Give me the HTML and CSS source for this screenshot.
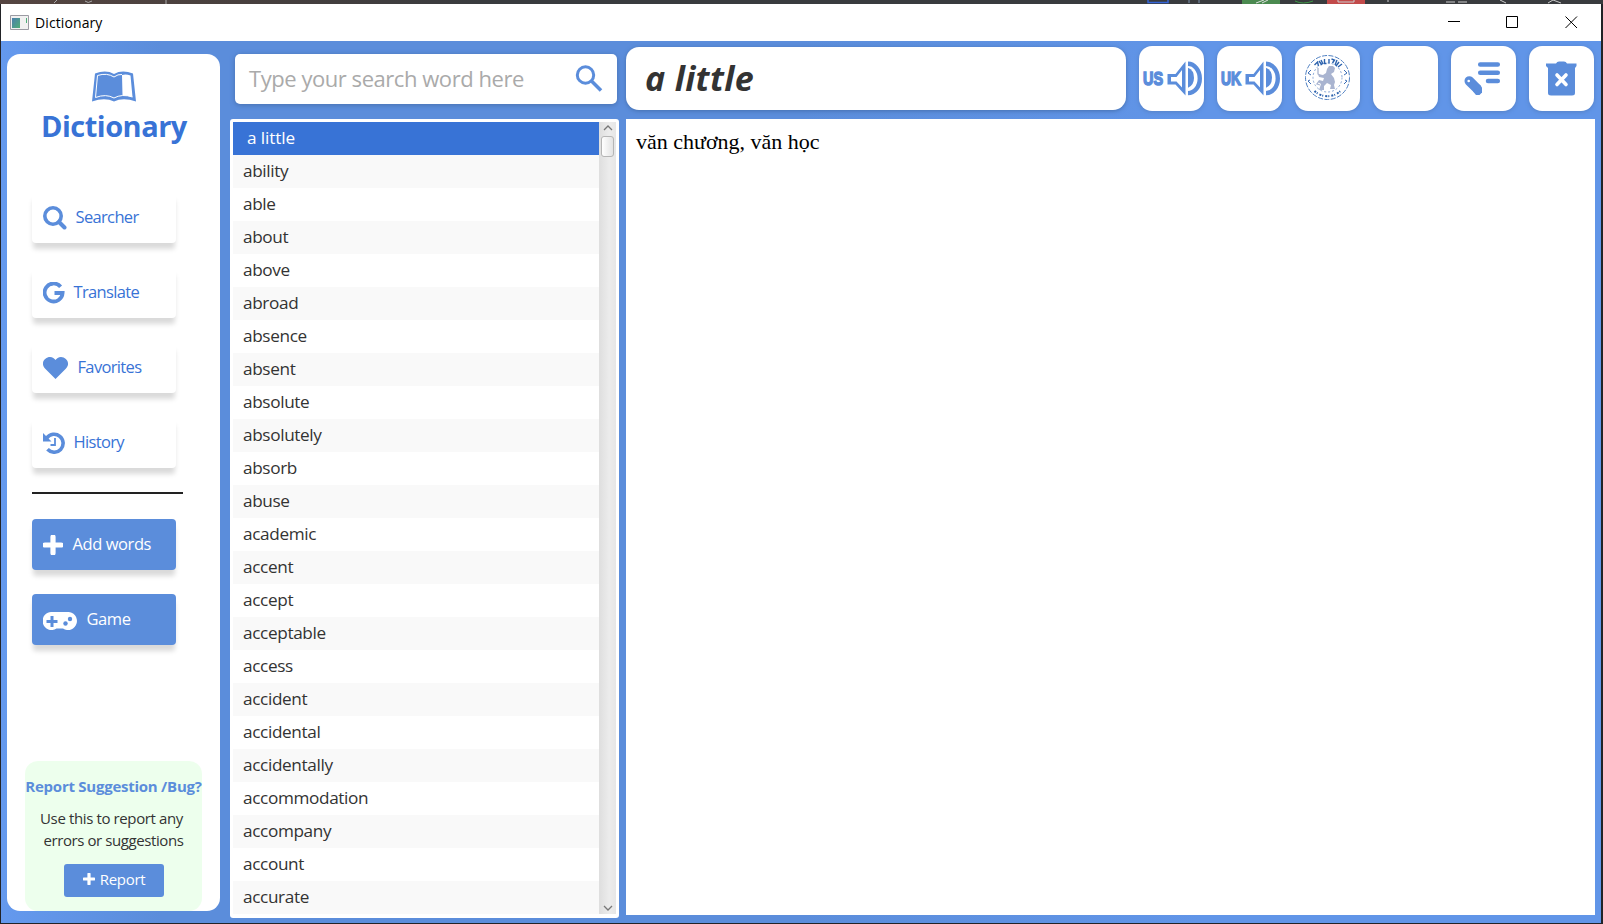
FILE: index.html
```html
<!DOCTYPE html>
<html lang="en">
<head>
<meta charset="utf-8">
<title>Dictionary</title>
<link rel="stylesheet" href="styles.css">
</head>
<body>
<div class="backdrop">
  <svg class="backdrop-strip" width="1603" height="4" viewBox="0 0 1603 4">
    <path d="M54 3l3-3M85 1q3 3 7 0M166 0v4" stroke="#aaa" fill="none"/>
    <path d="M1148 0v2.500h20V0" stroke="#3565d8" fill="none" stroke-width="1.500"/>
    <path d="M1189 0v3M1199 0v3" stroke="#7d93ad"/>
    <path d="M1242 0h38v4h-38z" fill="#4b8a50"/><path d="M1256 3l8-3M1262 3l6-3" stroke="#ddd"/>
    <path d="M1295 1q8 4 18 0" stroke="#3f9a48" fill="none"/>
    <path d="M1327 0h38v4h-38z" fill="#c24a4a"/><path d="M1338 0v2h16V0M1388 0v2M1446 2h9M1458 2h9M1500 0l6 3M1548 3l5-3 8 3" stroke="#ccc" fill="none"/>
  </svg>
  <div class="window">
    <header class="titlebar">
      <svg class="app-icon" width="19" height="16" viewBox="0 0 19 16">
        <defs><linearGradient id="g" x1="0" y1="0" x2="1" y2="1"><stop offset="0" stop-color="#4b7fae"/><stop offset="1" stop-color="#4fae77"/></linearGradient></defs>
        <path d="M.5.500h18v14H.500z" fill="#f1f1f1" stroke="#9b9ba3"/><path d="M2 3h8v10H2z" fill="url(#g)"/><path d="M16 3h1v5h-1z" fill="#4fae77"/>
      </svg>
      <span class="title">Dictionary</span>
      <svg class="controls" width="130" height="14" viewBox="0 0 130 14">
        <g fill="none" stroke="#000" stroke-width="1"><path d="M0 6.500h12M58.500 1.500h11v11h-11zM117.500 1.500l11.500 11.500M129 1.500l-11.500 11.500"/></g>
      </svg>
    </header>
    <div class="app">
      <aside class="sidebar">
        <svg class="book" width="44" height="31" viewBox="0 0 44 31">
          <path d="M3 2.500Q14-1.500 22 3Q30-1.500 41 2.500L44 30.500Q31 26 22 30.500Q13 26 0 30.500Z" fill="#5b8ddb"/>
          <path d="M30 4Q34 2.800 38.500 4.500L40.500 26Q35 24 30.500 24.500Z" fill="#fff"/>
          <path d="M5.500 4.500Q15 1.500 22 6Q26 3 30 3.500M5.500 4.500L3.500 26.500Q14 22.500 22 27Q30 22.500 40.500 26" fill="none" stroke="#fff" stroke-width="1"/>
        </svg>
        <h1 class="brand">Dictionary</h1>
        <nav class="nav">
          <a class="btn"><svg width="24" height="24" viewBox="0 0 24 24"><circle cx="10" cy="10" r="8.200" fill="none" stroke="#5b8ddb" stroke-width="3.600"/><path d="M16 16l5.500 5.500" stroke="#5b8ddb" stroke-width="4" stroke-linecap="round"/></svg><span>Searcher</span></a>
          <a class="btn"><svg width="22" height="22" viewBox="0 0 22 22"><path d="M17.600 4.800A9 9 0 1 0 19.600 11H11.500" fill="none" stroke="#5b8ddb" stroke-width="3.800"/></svg><span>Translate</span></a>
          <a class="btn"><svg width="26" height="22" viewBox="0 0 26 22"><path d="M12.500 22L2 11.500C-3 6 2 0 7 0C9.500 0 11.500 1.500 12.500 3C13.500 1.500 15.500 0 18 0C23 0 28 6 23 11.500Z" fill="#5b8ddb"/></svg><span>Favorites</span></a>
          <a class="btn"><svg width="22" height="22" viewBox="0 0 22 22"><path d="M3.800 6A9 9 0 1 1 4.500 17.300" fill="none" stroke="#5b8ddb" stroke-width="3.600"/><path d="M0 1v8.500h8.500z" fill="#5b8ddb"/><path d="M12 6v7H7.500" fill="none" stroke="#5b8ddb" stroke-width="1.800"/></svg><span>History</span></a>
        </nav>
        <hr class="rule">
        <nav class="nav">
          <a class="btn solid"><svg width="20" height="20" viewBox="0 0 20 20"><path d="M10 2v16M2 10h16" stroke="#fff" stroke-width="5.200" stroke-linecap="round"/></svg><span>Add words</span></a>
          <a class="btn solid"><svg class="pad" width="34" height="19" viewBox="0 0 34 19"><path d="M9 0h15.500a9 9 0 1 1-4.500 16.500h-6.500A9 9 0 1 1 9 0z" fill="#fff"/><path d="M9 4v11M3.500 9.500h11" stroke="#5b8ddb" stroke-width="3"/><circle cx="22.500" cy="11.500" r="2.200" fill="#5b8ddb"/><circle cx="27" cy="7" r="2.200" fill="#5b8ddb"/></svg><span>Game</span></a>
        </nav>
        <section class="report">
          <h2 class="report-title">Report Suggestion /Bug?</h2>
          <p class="report-text"><span class="first">Use this to report any</span><br><span class="second">errors or suggestions</span></p>
          <a class="report-btn"><svg width="12" height="12" viewBox="0 0 12 12"><path d="M6 1v10M1 6h10" stroke="#fff" stroke-width="3.200" stroke-linecap="round"/></svg><span>Report</span></a>
        </section>
      </aside>
      <section class="lookup">
        <div class="search"><span class="placeholder">Type your search word here</span>
          <svg width="28" height="28" viewBox="0 0 28 28"><circle cx="10.500" cy="10" r="8.200" fill="none" stroke="#5b8ddb" stroke-width="3"/><path d="M16.500 16L26 25.500" stroke="#5b8ddb" stroke-width="3.600"/></svg>
        </div>
        <div class="list">
          <ul class="words">
            <li class="selected">a little</li><li>ability</li><li>able</li><li>about</li><li>above</li><li>abroad</li><li>absence</li><li>absent</li><li>absolute</li><li>absolutely</li><li>absorb</li><li>abuse</li><li>academic</li><li>accent</li><li>accept</li><li>acceptable</li><li>access</li><li>accident</li><li>accidental</li><li>accidentally</li><li>accommodation</li><li>accompany</li><li>account</li><li>accurate</li>
          </ul>
          <div class="scroll">
            <svg width="10" height="6" viewBox="0 0 10 6"><path d="M1 5l4-4 4 4" fill="none" stroke="#777" stroke-width="1.300"/></svg>
            <div class="thumb"></div>
            <svg class="down" width="10" height="6" viewBox="0 0 10 6"><path d="M1 1l4 4 4-4" fill="none" stroke="#777" stroke-width="1.300"/></svg>
          </div>
        </div>
      </section>
      <main class="entry">
        <div class="toolbar">
          <div class="headword"><span>a little</span></div>
          <div class="tool"><svg width="65" height="65" viewBox="0 0 65 65"><text class="accent" x="4" y="39" textLength="20" lengthAdjust="spacingAndGlyphs">US</text><g class="speaker"><path d="M46.500 15.500v34L36.500 38.500H28.500V28h8Z"/><path class="hole" d="M43 24v17.500L37.500 35.500H32V31h5.500Z"/><path d="M49 21.700q6 2.500 6 10T49 41.700Z"/><path class="wave" d="M49 17.700A11.800 14.700 0 0 1 49 47.100"/></g></svg></div>
          <div class="tool"><svg width="65" height="65" viewBox="0 0 65 65"><text class="accent" x="4" y="39" textLength="20" lengthAdjust="spacingAndGlyphs">UK</text><g class="speaker"><path d="M46.500 15.500v34L36.500 38.500H28.500V28h8Z"/><path class="hole" d="M43 24v17.500L37.500 35.500H32V31h5.500Z"/><path d="M49 21.700q6 2.500 6 10T49 41.700Z"/><path class="wave" d="M49 17.700A11.800 14.700 0 0 1 49 47.100"/></g></svg></div>
          <div class="tool"><svg width="65" height="65" viewBox="0 0 65 65">
            <g fill="none" stroke="#4f80c2"><circle cx="32.500" cy="31.500" r="22" stroke-dasharray="5 1.500"/><circle cx="32.500" cy="31.500" r="14.500" stroke="#86a6d6" stroke-dasharray="2 2"/>
            <path d="M19.500 19l3-3 1 4M24 15l3 4M26 14l2 4M29.500 13v4.500h2M34 13v4.500M36.500 13l3 1-2 3M42 14l-2 5M44 16l-3 4M47 18l-4 3" stroke="#2c62ad" stroke-width="1.400"/><path d="M19.500 45A19 19 0 0 0 45.500 45" stroke="#2c62ad" stroke-width="2" stroke-dasharray="2 1 1 2"/>
            <path d="M16 24l-3 3 3 2M15 34l-2 1 3 3M49 24l3 3-3 2M50 34l2 1-3 3" stroke="#3a6db5" stroke-width="1"/></g>
            <path d="M34 20h4l2 2-1 4-3 2 3 4 1 4-1 3 1 4h-5l1-4-4-2-3 3v4h-5l2-6-3-2 1-2 4 1 1-3-5-1-1-3 5 1 3-2 1-4z" fill="#a9b4d0"/><path d="M23 22v6l3 2M24 35l-2 3 3 1" fill="none" stroke="#a9b4d0" stroke-width="1.300"/>
          </svg></div>
          <div class="tool"></div>
          <div class="tool"><svg width="65" height="65" viewBox="0 0 65 65"><g stroke="#5b8ddb" stroke-linecap="round"><path d="M29.200 18.600h17.600M29.200 26.700h17.600M37 34.900h9.800" stroke-width="4.500"/><path d="M18.300 35l7.200 7.200" stroke-width="9.600"/></g><path d="M28.800 38.500L31 41.500V46.500L28.500 49H25L22 45.500Z" fill="#5b8ddb"/><circle cx="17.700" cy="35" r="1.300" fill="#fff"/></svg></div>
          <div class="tool"><svg width="65" height="65" viewBox="0 0 65 65"><path d="M17 17.500h10q1-2 3-2h5q2 0 3 2h9.500v2.500L46 22v25q0 2.500-3 2.500H22q-3 0-3-2.500V22L17 20z" fill="#5b8ddb"/><path d="M28 29l9 9.500M37 29l-9 9.500" stroke="#fff" stroke-width="3.600" stroke-linecap="round"/></svg></div>
        </div>
        <article class="definition">văn chương, văn học</article>
      </main>
    </div>
  </div>
</div>
</body>
</html>
```
FILE: styles.css
```css
* { box-sizing: border-box; }
body { margin: 0; width: 1603px; height: 924px; overflow: hidden; font-family: "Open Sans", "Noto Sans", sans-serif; color: #333; }
h1, h2, p, ul { margin: 0; padding: 0; }
svg { display: block; flex: none; }
.backdrop { height: 924px; background: #222327; }
.backdrop-strip { background: linear-gradient(90deg, #554541, #48403e 15%, #393b3e 30%); }
.window { width: 1600px; height: 919px; margin-left: 1px; background: #fff; }
.titlebar { height: 37px; display: flex; align-items: center; padding: 0 23px 0 9px; }
.title { margin-left: 6px; font-size: 14px; color: #000; letter-spacing: 0.1px; }
.controls { margin-left: auto; margin-top: -2px; }
.app { height: 882px; display: flex; background: linear-gradient(90deg, #6499ee 0, #5b8ddb 10%, #5b8ddb 50%, #6195e8 75%, #6195e8 100%); }
.sidebar { width: 213px; height: 857px; margin: 13px 0 0 6px; background: #fff; border-radius: 13px; display: flex; flex-direction: column; }
.book { margin: 17px 0 0 84.5px; }
.brand { margin-left: 34px; font-size: 29px; line-height: 40px; height: 86px; margin-top: 4px; color: #3873d6; white-space: nowrap; font-weight: 700; letter-spacing: -0.5px; }
.nav { margin-left: 25px; display: flex; flex-direction: column; gap: 24px; }
.btn { width: 144px; height: 51px; display: flex; align-items: center; padding-left: 10.5px; gap: 9px; border-radius: 4px; background: #fff; box-shadow: 0 7px 5px -1px #dadada; color: #3873d6; font-size: 16.5px; white-space: nowrap; letter-spacing: -0.65px; }
.btn span { padding-bottom: 2px; }
.solid { background: #5b8ddb; color: #fff; letter-spacing: -0.42px; gap: 10px; }
.pad { margin-top: 3px; }
.rule { width: 151px; height: 2px; margin: 24px 0 25px 25px; border: 0; background: #222; }
.report { width: 177px; height: 150px; margin: auto 0 0 18px; background: #edffed; border-radius: 13px; text-align: center; white-space: nowrap; }
.report-title { margin-top: 14px; font-size: 15px; line-height: 22px; color: #5b8ddb; letter-spacing: -0.25px; }
.report-text { margin-top: 10px; font-size: 15px; line-height: 22px; letter-spacing: -0.38px; }
.first { margin-right: 4px; }
.second { letter-spacing: -0.42px; }
.report-btn { width: 100px; height: 33px; margin: 13px 0 0 39px; padding-bottom: 3px; display: flex; align-items: center; justify-content: center; gap: 5px; background: #5b8ddb; color: #fff; border-radius: 3px; font-size: 15px; letter-spacing: -0.3px; }
.lookup { width: 389px; margin: 13px 0 0 10px; }
.search { width: 382px; height: 50px; margin-left: 5px; padding: 0 14px 0 14px; display: flex; align-items: center; justify-content: space-between; background: #fff; border-radius: 5px; box-shadow: 0 1px 5px #476fae; color: #aaa; font-size: 22px; }
.placeholder { white-space: nowrap; letter-spacing: -0.45px; padding-bottom: 2px; }
.list { height: 799px; margin-top: 15px; padding: 3px; display: flex; background: #fff; border-radius: 3px; }
.words { flex: 1; list-style: none; font-size: 17.2px; line-height: 32px; letter-spacing: -0.36px; }
.words li { height: 33px; padding-left: 10px; }
.words li:nth-child(even) { background: #f9f9f9; }
.words .selected { background: #3873d6; color: #fff; padding-left: 14px; letter-spacing: -0.1px; }
.scroll { width: 17px; height: 792px; display: flex; flex-direction: column; align-items: center; padding: 3px 0; background: linear-gradient(90deg, #dedede, #ececec 60%, #e6e6e6); }
.thumb { width: 13px; height: 21px; margin-top: 5px; border: 1px solid #b5b5b5; border-radius: 3px; background: linear-gradient(90deg, #fff, #e3e3e3); }
.down { margin-top: auto; }
.entry { width: 969px; margin: 5px 0 0 7px; }
.toolbar { height: 73px; display: flex; gap: 13px; }
.headword { width: 500px; height: 63px; margin-top: 1px; padding: 0 0 1px 19px; display: flex; align-items: center; border-radius: 13px; background: #fff; box-shadow: 0 1px 4px #456fae; font-size: 34px; font-weight: 700; font-style: italic; letter-spacing: 0.35px; }
.tool { width: 65px; height: 65px; border-radius: 13px; background: #fff; box-shadow: 0 1px 4px #5581c5; }
.accent { font: 900 19px "Liberation Sans", sans-serif; fill: #5b8ddb; stroke: #5b8ddb; stroke-width: 1.5px; }
.speaker path { fill: #5b8ddb; }
.speaker .hole { fill: #fff; }
.speaker .wave { fill: none; stroke: #5b8ddb; stroke-width: 4.400px; }
.definition { height: 796px; padding: 10px; background: #fff; color: #000; font: 22px/26px "Liberation Serif", serif; }
```
